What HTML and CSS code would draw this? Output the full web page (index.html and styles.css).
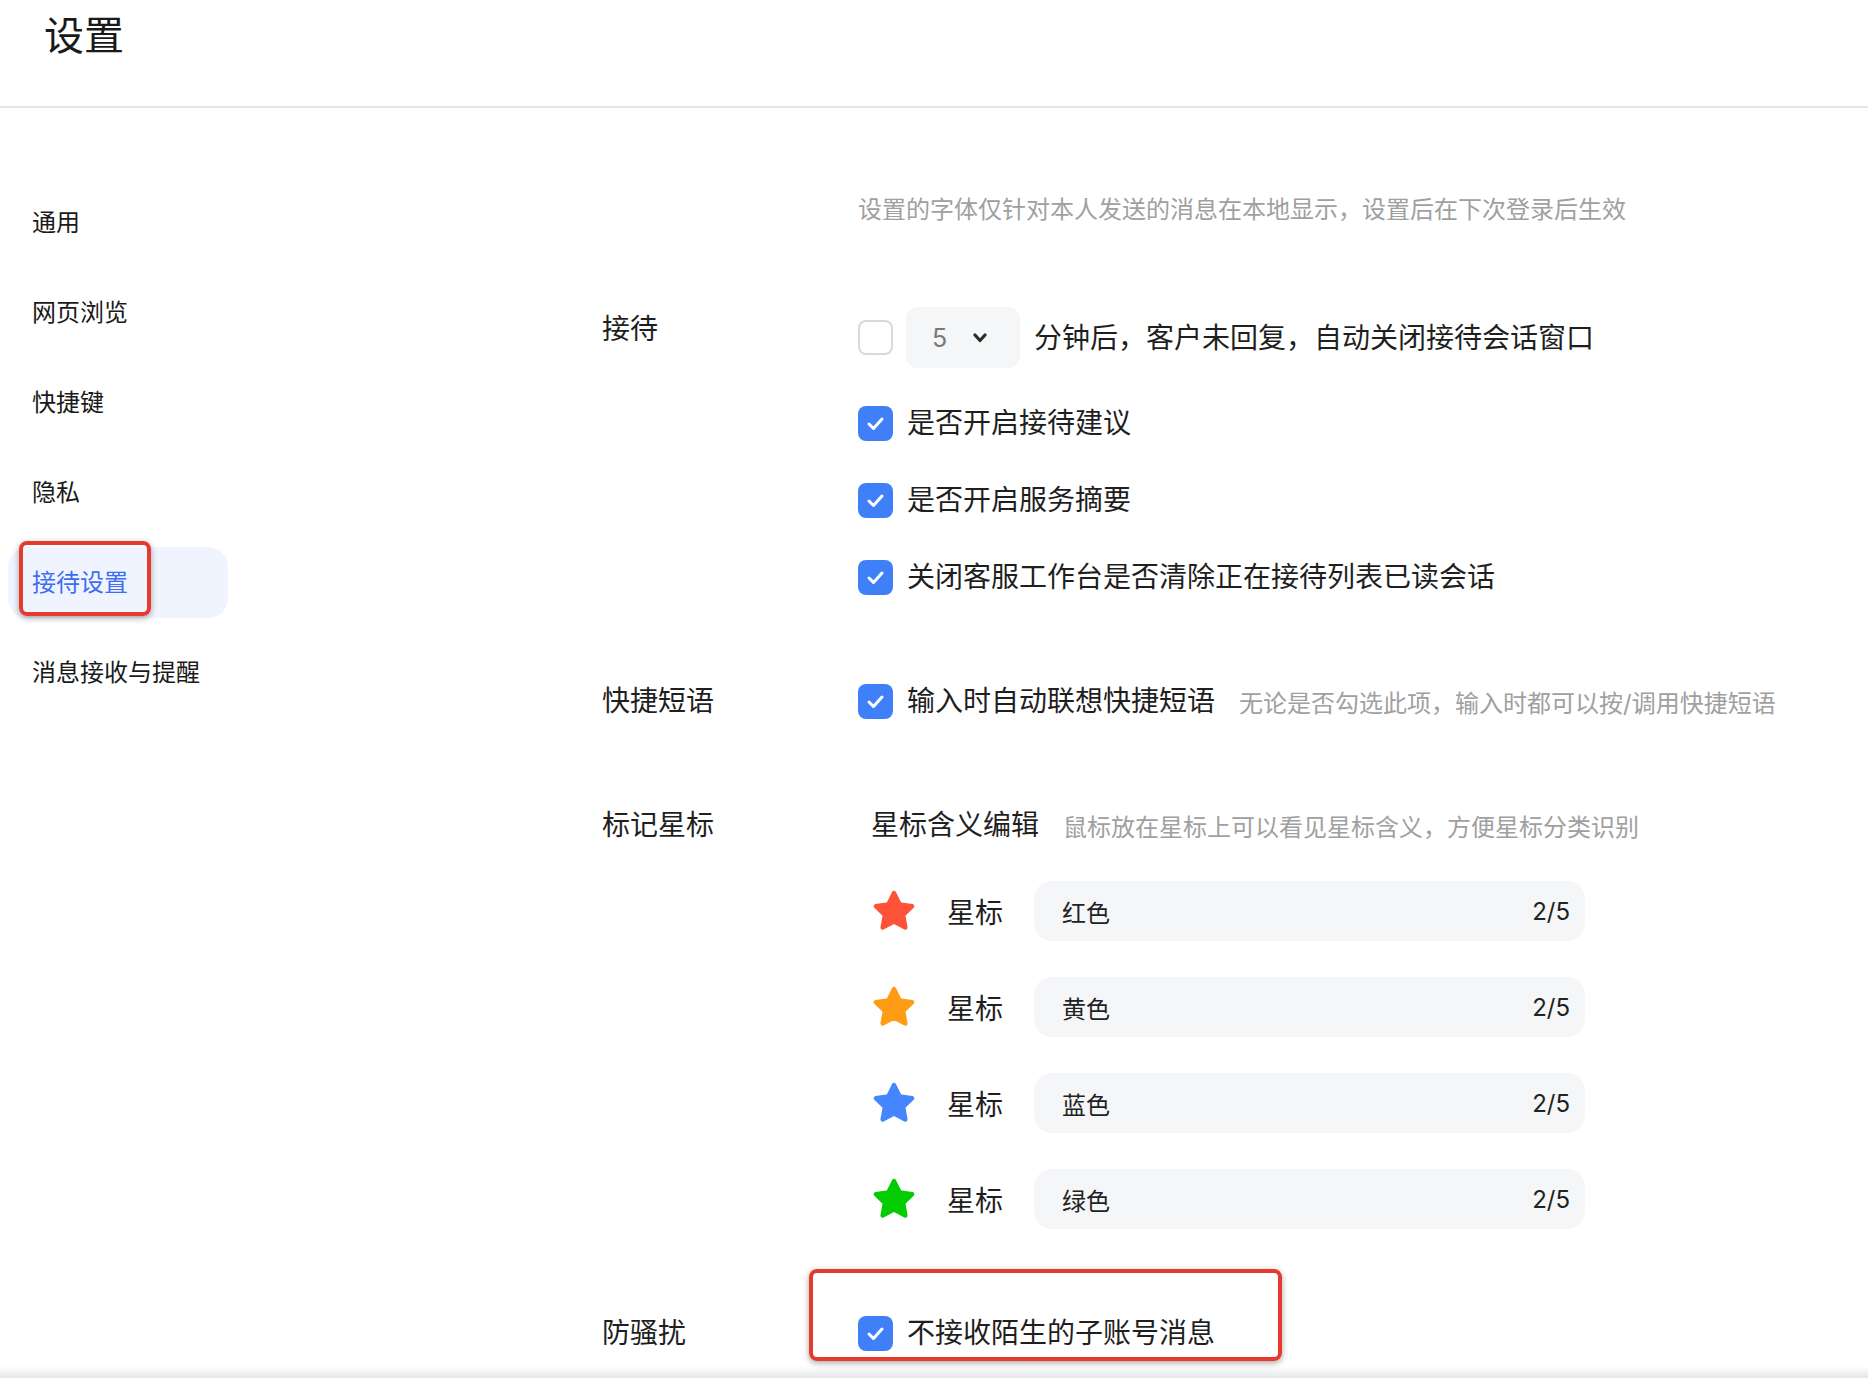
FILE: index.html
```html
<!DOCTYPE html>
<html lang="zh-CN">
<head>
<meta charset="utf-8">
<title>设置</title>
<link rel="stylesheet" href="styles.css">
</head>
<body>
<header class="header"><h1 class="title">设置</h1></header>
<div class="layout">
  <nav class="sidebar">
    <div class="nav-item">通用</div>
    <div class="nav-item">网页浏览</div>
    <div class="nav-item">快捷键</div>
    <div class="nav-item">隐私</div>
    <div class="nav-item active">接待设置<span class="mark mark-nav"></span></div>
    <div class="nav-item">消息接收与提醒</div>
  </nav>
  <main class="main">
    <div class="top-hint">设置的字体仅针对本人发送的消息在本地显示，设置后在下次登录后生效</div>

    <section class="section">
      <div class="label">接待</div>
      <div class="controls rows">
        <div class="row row-select">
          <span class="cb"></span>
          <span class="select"><span class="sel-val">5</span><svg class="chev" width="14" height="10" viewBox="0 0 14 10"><polyline points="2,2 7,7.5 12,2" fill="none" stroke="#2b2b2b" stroke-width="3.2" stroke-linecap="round" stroke-linejoin="round"/></svg></span>
          <span class="text">分钟后，客户未回复，自动关闭接待会话窗口</span>
        </div>
        <div class="row">
          <span class="cb on"><svg width="35" height="35" viewBox="0 0 35 35"><polyline points="11,18 15.5,22.5 24,13" fill="none" stroke="#fff" stroke-width="3" stroke-linecap="round" stroke-linejoin="round"/></svg></span>
          <span class="text">是否开启接待建议</span>
        </div>
        <div class="row">
          <span class="cb on"><svg width="35" height="35" viewBox="0 0 35 35"><polyline points="11,18 15.5,22.5 24,13" fill="none" stroke="#fff" stroke-width="3" stroke-linecap="round" stroke-linejoin="round"/></svg></span>
          <span class="text">是否开启服务摘要</span>
        </div>
        <div class="row">
          <span class="cb on"><svg width="35" height="35" viewBox="0 0 35 35"><polyline points="11,18 15.5,22.5 24,13" fill="none" stroke="#fff" stroke-width="3" stroke-linecap="round" stroke-linejoin="round"/></svg></span>
          <span class="text">关闭客服工作台是否清除正在接待列表已读会话</span>
        </div>
      </div>
    </section>

    <section class="section">
      <div class="label">快捷短语</div>
      <div class="controls">
        <div class="row">
          <span class="cb on"><svg width="35" height="35" viewBox="0 0 35 35"><polyline points="11,18 15.5,22.5 24,13" fill="none" stroke="#fff" stroke-width="3" stroke-linecap="round" stroke-linejoin="round"/></svg></span>
          <span class="text">输入时自动联想快捷短语</span>
          <span class="hint">无论是否勾选此项，输入时都可以按/调用快捷短语</span>
        </div>
      </div>
    </section>

    <section class="section">
      <div class="label">标记星标</div>
      <div class="controls">
        <div class="row star-head">
          <span class="text">星标含义编辑</span>
          <span class="hint">鼠标放在星标上可以看见星标含义，方便星标分类识别</span>
        </div>
        <div class="star-list">
          <div class="star-row">
            <svg class="star" width="44" height="44" viewBox="0 0 24 24"><polygon points="12,2.2 15.1,8.4 21.9,9.4 17,14.2 18.2,21 12,17.8 5.8,21 7,14.2 2.1,9.4 8.9,8.4" fill="#ff5339" stroke="#ff5339" stroke-width="2.4" stroke-linejoin="round"/></svg>
            <span class="star-name">星标</span>
            <span class="star-input"><span>红色</span><span class="count">2/5</span></span>
          </div>
          <div class="star-row">
            <svg class="star" width="44" height="44" viewBox="0 0 24 24"><polygon points="12,2.2 15.1,8.4 21.9,9.4 17,14.2 18.2,21 12,17.8 5.8,21 7,14.2 2.1,9.4 8.9,8.4" fill="#ff9c15" stroke="#ff9c15" stroke-width="2.4" stroke-linejoin="round"/></svg>
            <span class="star-name">星标</span>
            <span class="star-input"><span>黄色</span><span class="count">2/5</span></span>
          </div>
          <div class="star-row">
            <svg class="star" width="44" height="44" viewBox="0 0 24 24"><polygon points="12,2.2 15.1,8.4 21.9,9.4 17,14.2 18.2,21 12,17.8 5.8,21 7,14.2 2.1,9.4 8.9,8.4" fill="#4585ff" stroke="#4585ff" stroke-width="2.4" stroke-linejoin="round"/></svg>
            <span class="star-name">星标</span>
            <span class="star-input"><span>蓝色</span><span class="count">2/5</span></span>
          </div>
          <div class="star-row">
            <svg class="star" width="44" height="44" viewBox="0 0 24 24"><polygon points="12,2.2 15.1,8.4 21.9,9.4 17,14.2 18.2,21 12,17.8 5.8,21 7,14.2 2.1,9.4 8.9,8.4" fill="#03cc03" stroke="#03cc03" stroke-width="2.4" stroke-linejoin="round"/></svg>
            <span class="star-name">星标</span>
            <span class="star-input"><span>绿色</span><span class="count">2/5</span></span>
          </div>
        </div>
      </div>
    </section>

    <section class="section section-last">
      <div class="label">防骚扰</div>
      <div class="controls">
        <div class="row marked">
          <span class="mark mark-row"></span>
          <span class="cb on"><svg width="35" height="35" viewBox="0 0 35 35"><polyline points="11,18 15.5,22.5 24,13" fill="none" stroke="#fff" stroke-width="3" stroke-linecap="round" stroke-linejoin="round"/></svg></span>
          <span class="text">不接收陌生的子账号消息</span>
        </div>
      </div>
    </section>
  </main>
</div>
</body>
</html>
```

FILE: styles.css
```css
* { box-sizing: border-box; }
html, body {
  margin: 0;
  padding: 0;
  height: 1378px;
  overflow: hidden;
  background: #fff;
}
body {
  font-family: "Inter", "Noto Sans CJK SC", sans-serif;
  color: #1f1f1f;
  position: relative;
}
body::after {
  content: "";
  position: absolute;
  left: 0;
  right: 0;
  bottom: 0;
  height: 12px;
  background: linear-gradient(to bottom, rgba(236,237,240,0), #e6e7ea);
}
.header {
  height: 108px;
  padding: 16px 0 0 44px;
  border-bottom: 2px solid #e4e6eb;
}
.title {
  margin: 0;
  font-size: 40px;
  line-height: 40px;
  font-weight: 400;
  color: #1a1a1a;
}
.layout {
  display: flex;
}
.sidebar {
  width: 220px;
  margin-left: 8px;
  padding-top: 79px;
  display: flex;
  flex-direction: column;
  gap: 19px;
}
.nav-item {
  position: relative;
  height: 71px;
  line-height: 71px;
  padding-left: 24px;
  font-size: 24px;
  color: #1a1a1a;
  border-radius: 20px;
}
.nav-item.active {
  background: #f0f4fe;
  color: #3e6cf4;
}
.mark {
  position: absolute;
  border: 4px solid #e63a2e;
  border-radius: 8px;
  box-shadow: 0 2px 6px rgba(0,0,0,0.35);
}
.mark-nav {
  left: 11px;
  top: -6px;
  width: 132px;
  height: 75px;
}
.main {
  flex: 1;
  padding-left: 374px;
  padding-top: 85px;
  display: flex;
  flex-direction: column;
  gap: 80px;
}
.top-hint {
  margin-left: 256px;
  font-size: 24px;
  line-height: 34px;
  color: #a0a0a0;
}
.section {
  display: grid;
  grid-template-columns: 256px 1fr;
  align-items: start;
}
.section-last { margin-top: 2px; }
.label {
  font-size: 28px;
  line-height: 44px;
  color: #1f1f1f;
}
.controls {
  display: flex;
  flex-direction: column;
}
.rows { gap: 33px; }
.row {
  display: flex;
  align-items: center;
  height: 44px;
  position: relative;
}
.row-select { height: 61px; }
.cb {
  flex: none;
  width: 35px;
  height: 35px;
  border-radius: 8px;
  border: 2px solid #d6d9de;
  background: #fff;
  margin-right: 14px;
  display: flex;
}
.cb.on {
  background: #3f80f8;
  border: none;
}
.row-select .cb { margin-right: 13px; }
.select {
  flex: none;
  width: 114px;
  height: 61px;
  border-radius: 12px;
  background: #f5f6f8;
  display: flex;
  align-items: center;
  padding-left: 26px;
  margin-right: 14px;
}
.sel-val {
  font-size: 25px;
  color: #7a7a7a;
  width: 41px;
}
.chev { display: block; }
.text {
  font-size: 28px;
  line-height: 44px;
  color: #1f1f1f;
  white-space: nowrap;
}
.hint {
  font-size: 24px;
  color: #a0a0a0;
  margin-left: 24px;
  white-space: nowrap;
}
.star-head { padding-left: 13px; }
.star-list {
  margin-top: 34px;
  display: flex;
  flex-direction: column;
  gap: 36px;
}
.star-row {
  display: flex;
  align-items: center;
  height: 60px;
  padding-left: 14px;
}
.star {
  flex: none;
  display: block;
  margin-right: 31px;
}
.star-name {
  font-size: 28px;
  width: 56px;
  margin-right: 31px;
  color: #1f1f1f;
}
.star-input {
  width: 551px;
  height: 60px;
  border-radius: 18px;
  background: #f5f6f8;
  display: flex;
  align-items: center;
  justify-content: space-between;
  padding: 0 15px 0 28px;
  font-size: 24px;
  color: #222;
}
.count {
  font-size: 24px;
  color: #222;
}
.mark-row {
  left: -49px;
  top: -42px;
  width: 473px;
  height: 92px;
}
```
